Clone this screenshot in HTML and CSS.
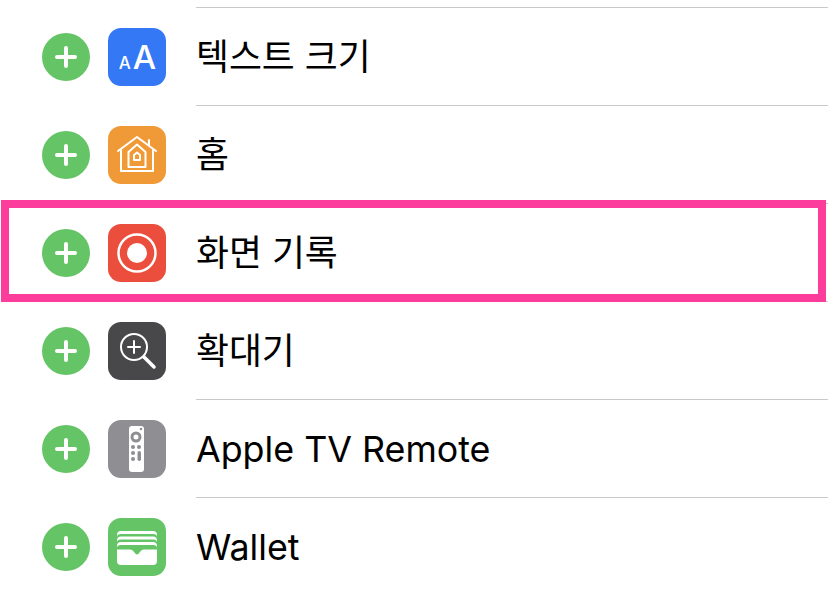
FILE: index.html
```html
<!DOCTYPE html>
<html lang="ko">
<head>
<meta charset="utf-8">
<title>제어 센터</title>
<link rel="stylesheet" href="styles.css">
</head>
<body>
<ul class="list">
  <li class="row">
    <span class="add"><svg viewBox="0 0 48 48"><path d="M24 15v18M15 24h18"/></svg></span>
    <span class="app blue"><span class="small-a">A</span><span class="big-a">A</span></span>
    <span class="label">텍스트 크기</span>
  </li>
  <li class="row">
    <span class="add"><svg viewBox="0 0 48 48"><path d="M24 15v18M15 24h18"/></svg></span>
    <span class="app orange"><svg viewBox="0 0 58 58" class="line"><path d="M10 25 29 11l19 14M13 24v21h32V24M41 19v-5"/><path d="M20.500 41V26L29 18.500 37.500 26v15z"/><path d="M26 34v-5l3-2.500 3 2.500v5z"/></svg></span>
    <span class="label">홈</span>
  </li>
  <li class="row">
    <span class="add"><svg viewBox="0 0 48 48"><path d="M24 15v18M15 24h18"/></svg></span>
    <span class="app red"><svg viewBox="0 0 58 58"><circle cx="29" cy="29" r="18.500" class="ring"/><circle cx="29" cy="29" r="10" class="dot"/></svg></span>
    <span class="label">화면 기록</span>
    <span class="highlight"></span>
  </li>
  <li class="row">
    <span class="add"><svg viewBox="0 0 48 48"><path d="M24 15v18M15 24h18"/></svg></span>
    <span class="app dark"><svg viewBox="0 0 58 58" class="line"><circle cx="26" cy="25" r="13"/><path d="M26 19v12M20 25h12"/><path d="m36 35 10 10" class="thick"/></svg></span>
    <span class="label">확대기</span>
  </li>
  <li class="row">
    <span class="add"><svg viewBox="0 0 48 48"><path d="M24 15v18M15 24h18"/></svg></span>
    <span class="app gray"><svg viewBox="0 0 58 58"><rect x="21" y="6" width="15" height="46" rx="3" class="dot"/><circle cx="28" cy="17" r="4" class="hole-ring"/><circle cx="33" cy="9" r="1.200" class="hole"/><circle cx="25" cy="27" r="2" class="hole"/><circle cx="31" cy="27" r="2" class="hole"/><circle cx="25" cy="33" r="2" class="hole"/><circle cx="25" cy="39" r="2" class="hole"/><rect x="29.500" y="31" width="3.500" height="10" rx="1.700" class="hole"/></svg></span>
    <span class="label">Apple TV Remote</span>
  </li>
  <li class="row">
    <span class="add"><svg viewBox="0 0 48 48"><path d="M24 15v18M15 24h18"/></svg></span>
    <span class="app green"><svg viewBox="0 0 58 58"><path d="M9 19v-2q0-4 4-4h32q4 0 4 4v2q0-3-4-3H13q-4 0-4 3z" class="dot"/><path d="M9 24.500v-2q0-4 4-4h32q4 0 4 4v2q0-3-4-3H13q-4 0-4 3z" class="dot"/><path d="M9 30v-2q0-4 4-4h32q4 0 4 4v2q0-3-4-3H13q-4 0-4 3z" class="dot"/><path d="M9 31.500h13c2 0 3 1 4.500 3 1.500 2.500 3.500 2.500 5 0 1.500-2 2.500-3 4.500-3h13V43q0 4-4 4H13q-4 0-4-4z" class="dot"/></svg></span>
    <span class="label">Wallet</span>
  </li>
</ul>
</body>
</html>
```
FILE: styles.css
```css
* , *::before, *::after { box-sizing: border-box; }
html, body { margin: 0; background: #fff; }
body { width: 828px; height: 594px; overflow: hidden; font-family: "Inter", "Noto Sans CJK KR", sans-serif; color: #000; }
.list { list-style: none; margin: 0; padding: 7px 0 0; }
.row { position: relative; height: 98px; display: flex; align-items: center; padding: 2px 0 0 42px; }
.row::after { content: ""; position: absolute; left: 196px; right: 0; top: 0; height: 1px; background: #c9c9cb; }
.add { width: 48px; height: 48px; border-radius: 50%; background: #65c466; flex: none; display: block; }
.add svg { display: block; width: 48px; height: 48px; fill: none; stroke: #fff; stroke-width: 4px; stroke-linecap: round; }
.app { width: 58px; height: 58px; margin-left: 18px; border-radius: 13px; flex: none; display: flex; align-items: center; justify-content: center; color: #fff; }
.app svg { display: block; width: 58px; height: 58px; }
.blue { background: #3478f6; align-items: baseline; font-family: "Inter", sans-serif; font-weight: 500; line-height: 58px; padding-left: 1px; }
.small-a { font-size: 17px; margin-right: 2px; }
.big-a { font-size: 33px; }
.orange { background: #f09a37; }
.red { background: #eb4e3d; }
.dark { background: #48484a; }
.gray { background: #8e8e93; }
.green { background: #65c466; }
.line { fill: none; stroke: #fff; stroke-width: 2px; stroke-linecap: round; stroke-linejoin: round; }
.line .thick { stroke-width: 3.500px; }
.ring { fill: none; stroke: #fff; stroke-width: 2.500px; }
.dot { fill: #fff; }
.hole { fill: #8e8e93; }
.hole-ring { fill: none; stroke: #8e8e93; stroke-width: 3px; }
.label { margin-left: 30px; font-size: 35.800px; line-height: 40px; white-space: nowrap; }
.highlight { position: absolute; z-index: 1; left: 1px; right: 2px; top: -3px; height: 102px; border: 8px solid #fc3d9b; }
```
